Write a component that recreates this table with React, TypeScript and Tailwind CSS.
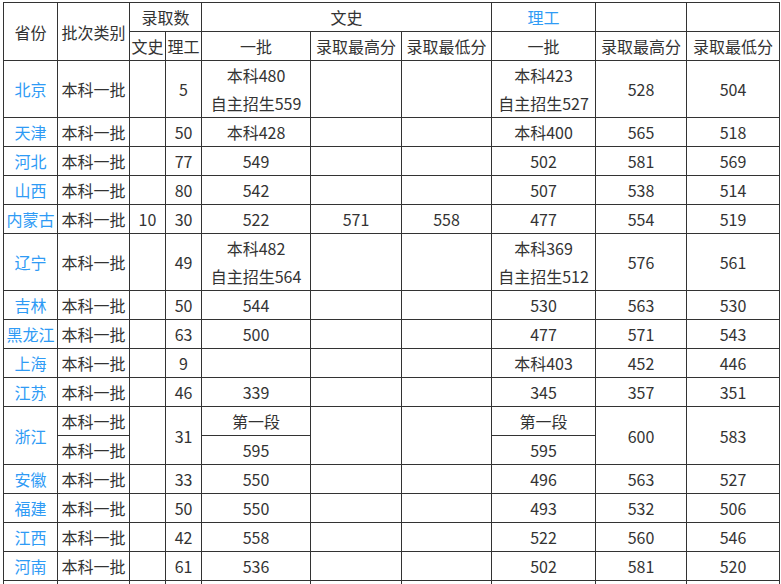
const cell = "border border-[#333] p-0 text-center align-middle font-normal";
const blue = "text-[#2f9bf5]";

type Row = {
  province: string;
  wenCount?: string;
  liCount: string;
  wenBatch?: string[];
  wenHigh?: string;
  wenLow?: string;
  liBatch: string[];
  liHigh: string;
  liLow: string;
};

const rowsTop: Row[] = [
  { province: "北京", liCount: "5", wenBatch: ["本科480", "自主招生559"], liBatch: ["本科423", "自主招生527"], liHigh: "528", liLow: "504" },
  { province: "天津", liCount: "50", wenBatch: ["本科428"], liBatch: ["本科400"], liHigh: "565", liLow: "518" },
  { province: "河北", liCount: "77", wenBatch: ["549"], liBatch: ["502"], liHigh: "581", liLow: "569" },
  { province: "山西", liCount: "80", wenBatch: ["542"], liBatch: ["507"], liHigh: "538", liLow: "514" },
  { province: "内蒙古", wenCount: "10", liCount: "30", wenBatch: ["522"], wenHigh: "571", wenLow: "558", liBatch: ["477"], liHigh: "554", liLow: "519" },
  { province: "辽宁", liCount: "49", wenBatch: ["本科482", "自主招生564"], liBatch: ["本科369", "自主招生512"], liHigh: "576", liLow: "561" },
  { province: "吉林", liCount: "50", wenBatch: ["544"], liBatch: ["530"], liHigh: "563", liLow: "530" },
  { province: "黑龙江", liCount: "63", wenBatch: ["500"], liBatch: ["477"], liHigh: "571", liLow: "543" },
  { province: "上海", liCount: "9", liBatch: ["本科403"], liHigh: "452", liLow: "446" },
  { province: "江苏", liCount: "46", wenBatch: ["339"], liBatch: ["345"], liHigh: "357", liLow: "351" },
];

const rowsBottom: Row[] = [
  { province: "安徽", liCount: "33", wenBatch: ["550"], liBatch: ["496"], liHigh: "563", liLow: "527" },
  { province: "福建", liCount: "50", wenBatch: ["550"], liBatch: ["493"], liHigh: "532", liLow: "506" },
  { province: "江西", liCount: "42", wenBatch: ["558"], liBatch: ["522"], liHigh: "560", liLow: "546" },
  { province: "河南", liCount: "61", wenBatch: ["536"], liBatch: ["502"], liHigh: "581", liLow: "520" },
];

function Lines({ items }: { items?: string[] }) {
  if (!items) return null;
  return (
    <>
      {items.map((t, i) => (
        <div key={i}>{t}</div>
      ))}
    </>
  );
}

function DataRow({ row }: { row: Row }) {
  return (
    <tr>
      <td className={`${cell} ${blue}`}>{row.province}</td>
      <td className={cell}>本科一批</td>
      <td className={cell}>{row.wenCount}</td>
      <td className={cell}>{row.liCount}</td>
      <td className={cell}>
        <Lines items={row.wenBatch} />
      </td>
      <td className={cell}>{row.wenHigh}</td>
      <td className={cell}>{row.wenLow}</td>
      <td className={cell}>
        <Lines items={row.liBatch} />
      </td>
      <td className={cell}>{row.liHigh}</td>
      <td className={cell}>{row.liLow}</td>
    </tr>
  );
}

export default function App() {
  return (
    <div className="h-[584px] w-[781px] overflow-hidden bg-white pl-[3px] pt-[2px]">
      <table
        className="w-[776px] table-fixed border-collapse text-[16px] leading-[28px] text-[#333]"
        style={{ fontFamily: '"Noto Sans CJK SC", "Noto Sans", sans-serif' }}
      >
        <colgroup>
          <col className="w-[54px]" />
          <col className="w-[72px]" />
          <col className="w-[36px]" />
          <col className="w-[36px]" />
          <col className="w-[109px]" />
          <col className="w-[91px]" />
          <col className="w-[90px]" />
          <col className="w-[104px]" />
          <col className="w-[91px]" />
          <col className="w-[93px]" />
        </colgroup>
        <thead>
          <tr>
            <th rowSpan={2} className={cell}>省份</th>
            <th rowSpan={2} className={cell}>批次类别</th>
            <th colSpan={2} className={cell}>录取数</th>
            <th colSpan={3} className={cell}>文史</th>
            <th className={`${cell} ${blue}`}>理工</th>
            <th className={cell}></th>
            <th className={cell}></th>
          </tr>
          <tr>
            <th className={cell}>文史</th>
            <th className={cell}>理工</th>
            <th className={cell}>一批</th>
            <th className={cell}>录取最高分</th>
            <th className={cell}>录取最低分</th>
            <th className={cell}>一批</th>
            <th className={cell}>录取最高分</th>
            <th className={cell}>录取最低分</th>
          </tr>
        </thead>
        <tbody>
          {rowsTop.map((r) => (
            <DataRow key={r.province} row={r} />
          ))}
          <tr>
            <td rowSpan={2} className={`${cell} ${blue}`}>浙江</td>
            <td className={cell}>本科一批</td>
            <td rowSpan={2} className={cell}></td>
            <td rowSpan={2} className={cell}>31</td>
            <td className={cell}>第一段</td>
            <td rowSpan={2} className={cell}></td>
            <td rowSpan={2} className={cell}></td>
            <td className={cell}>第一段</td>
            <td rowSpan={2} className={cell}>600</td>
            <td rowSpan={2} className={cell}>583</td>
          </tr>
          <tr>
            <td className={cell}>本科一批</td>
            <td className={cell}>595</td>
            <td className={cell}>595</td>
          </tr>
          {rowsBottom.map((r) => (
            <DataRow key={r.province} row={r} />
          ))}
          <tr>
            {Array.from({ length: 10 }).map((_, i) => (
              <td key={i} className={cell}>&nbsp;</td>
            ))}
          </tr>
        </tbody>
      </table>
    </div>
  );
}
